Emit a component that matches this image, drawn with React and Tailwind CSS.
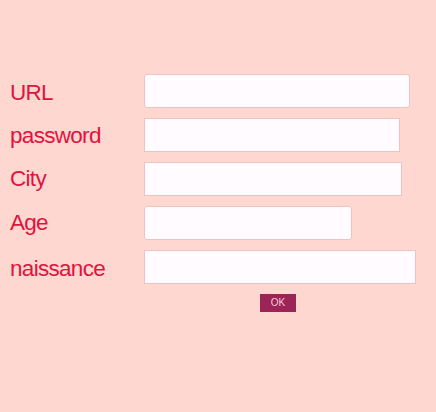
const fields = [
  { label: 'URL', w: 'w-[266px]', r: 'rounded-[3px]', pt: 'pt-[3px]' },
  { label: 'password', w: 'w-[256px]', r: '', pt: 'pt-[1px]' },
  { label: 'City', w: 'w-[258px]', r: '', pt: 'pt-0' },
  { label: 'Age', w: 'w-[208px]', r: 'rounded-[3px]', pt: 'pt-0' },
  { label: 'naissance', w: 'w-[272px]', r: '', pt: 'pt-[3px]' },
]

export default function App() {
  return (
    <div className="w-[436px] h-[412px] bg-[#ffd7d1] pt-[74px] font-[family-name:'Liberation_Sans',Arial,sans-serif]">
      <form className="flex flex-col gap-[10px]" onSubmit={e => e.preventDefault()}>
        {fields.map(f => (
          <div key={f.label} className="flex h-[34px] items-center">
            <label className={`w-[144px] pl-[10px] text-[22.5px] tracking-[-0.7px] leading-[34px] text-[#e2123c] ${f.pt}`}>
              {f.label}
            </label>
            <input
              type="text"
              className={`h-[34px] ${f.w} ${f.r} bg-[#fffbff] border border-[#eec3c3] outline-none`}
            />
          </div>
        ))}
        <div className="flex pl-[260px]">
          <button
            type="submit"
            className="w-[36px] h-[18px] bg-[#9c2457] text-[#f6c9de] text-[10px] leading-[18px]"
          >
            OK
          </button>
        </div>
      </form>
    </div>
  )
}
